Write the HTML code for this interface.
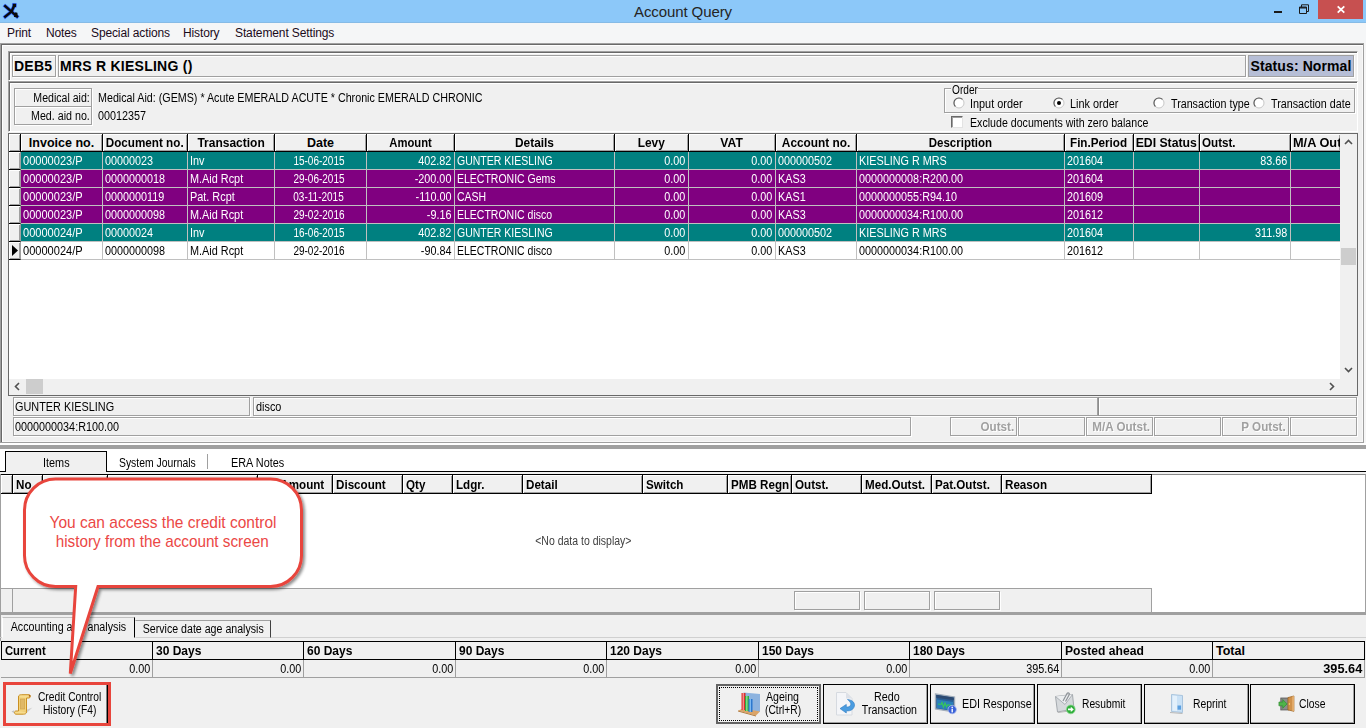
<!DOCTYPE html><html><head><meta charset="utf-8"><title>Account Query</title><style>
html,body{margin:0;padding:0;}
body{width:1366px;height:728px;overflow:hidden;background:#f0f0f0;position:relative;font-family:"Liberation Sans",sans-serif;font-size:12.5px;color:#000;}
div{position:absolute;box-sizing:border-box;white-space:nowrap;}
svg{position:absolute;overflow:visible;}
span.s,span.sb{display:inline-block;}
.s{transform:scaleX(.87);}
.sb{transform:scaleX(1);font-weight:bold;}
.ol{transform-origin:0 50%;}
.or{transform-origin:100% 50%;}
.oc{transform-origin:50% 50%;}
.t{font-size:12.5px;line-height:13px;height:13px;margin-top:1px;}
.pnl{border:1px solid;border-color:#a0a0a0 #fff #fff #a0a0a0;box-shadow:inset 1px 1px 0 #696969,inset 2px 2px 0 #fff;}
.fld{border:1px solid #a0a0a0;box-shadow:1px 1px 0 #fff,inset 1px 1px 0 #fff;}
.m{font-size:12px;line-height:21px;top:23px;height:21px;color:#1a0a1a;letter-spacing:-0.12px;}
.hd{background:#f0f0f0;border:1px solid #000;border-width:0 1px 1px 0;box-shadow:inset 1px 1px 0 #fff,inset -1px -1px 0 #a0a0a0;font-weight:bold;line-height:19.5px;overflow:hidden;}
.cl{line-height:19.5px;overflow:hidden;}
.w{color:#fff;}
</style></head><body>
<div style="left:0px;top:0px;width:1366px;height:22px;background:#8cc8f9;"></div>
<div style="left:0px;top:22px;width:1366px;height:1px;background:#86bbe6;"></div>
<div style="left:0;top:2.5px;width:1366px;text-align:center;font-size:15px;line-height:18px;color:#242424;letter-spacing:-0.1px;">Account Query</div>
<svg style="left:2px;top:2px" width="18" height="18" viewBox="0 0 18 18"><g fill="none" stroke="#2f5ff0" stroke-width="3.6" stroke-linecap="square"><path d="M3.2 4.2 L15 14.5"/><path d="M3.2 14.7 L9.5 9.6 L12.4 3.4"/></g><rect x="10.2" y="1.2" width="4.4" height="4.2" fill="#2f5ff0"/><g fill="none" stroke="#0a0a0a" stroke-width="2.3" stroke-linecap="square"><path d="M3.2 4.2 L15 14.5"/><path d="M3.2 14.7 L9.5 9.6 L12.2 3.8"/></g><rect x="10.8" y="1.8" width="3.2" height="3.2" fill="#0a0a0a"/><path d="M13.3 10.3 L15.4 10.8 L15.8 15.3 L11.8 14.9Z" fill="#0a0a0a"/></svg>
<div style="left:1318px;top:0px;width:45px;height:19px;background:#c75050;"></div>
<svg style="left:1337px;top:6px" width="8" height="7" viewBox="0 0 8 7"><path d="M0.7 0.3 L7.3 6.7 M7.3 0.3 L0.7 6.7" stroke="#fff" stroke-width="1.8"/></svg>
<div style="left:1274px;top:11px;width:8px;height:2px;background:#1a1a1a;"></div>
<svg style="left:1299px;top:4px" width="10" height="10" viewBox="0 0 10 10"><path d="M0.5 3 H7.5 V9.5 H0.5 Z M2.5 3 V0.8 H9.5 V7.5 H7.5" fill="none" stroke="#1a1a1a" stroke-width="1"/><path d="M0 3.8 H8" stroke="#1a1a1a" stroke-width="1.4"/></svg>
<div style="left:0px;top:23px;width:1366px;height:20px;background:#f5f6f7;"></div>
<div class="m" style="left:7px;">Print</div>
<div class="m" style="left:46px;">Notes</div>
<div class="m" style="left:91px;">Special actions</div>
<div class="m" style="left:183px;">History</div>
<div class="m" style="left:235px;">Statement Settings</div>
<div style="left:1364px;top:43px;width:2px;height:402px;background:#f6f6f6;"></div>
<div style="left:0px;top:43px;width:1364px;height:400px;border:1px solid;border-color:#a0a0a0 #a0a0a0 #a0a0a0 #a0a0a0;box-shadow:inset 1px 1px 0 #696969,inset 2px 2px 0 #fff,inset -1px -1px 0 #f8f8f8;"></div>
<div style="left:0px;top:443px;width:1366px;height:2px;background:#fff;"></div>
<div class="pnl" style="left:8px;top:51px;width:1350px;height:30px;"></div>
<div class="fld" style="left:12px;top:55px;width:44px;height:22px;"></div>
<div style="left:14px;top:57px;font-size:14px;font-weight:bold;line-height:18px;letter-spacing:0.25px;">DEB5</div>
<div class="fld" style="left:58px;top:55px;width:1188px;height:22px;"></div>
<div style="left:60px;top:57px;font-size:14px;font-weight:bold;line-height:18px;letter-spacing:0.25px;">MRS R KIESLING ()</div>
<div style="left:1248px;top:55px;width:106px;height:22px;background:#b6bed6;border:1px solid #a0a0a0;box-shadow:1px 1px 0 #fff;"></div>
<div style="left:1250.5px;top:57px;font-size:14px;font-weight:bold;line-height:18px;letter-spacing:0.1px;">Status: Normal</div>
<div class="pnl" style="left:8px;top:81px;width:1350px;height:51px;"></div>
<div class="fld" style="left:14px;top:88px;width:78px;height:19px;"></div>
<div class="fld" style="left:14px;top:106px;width:78px;height:19px;"></div>
<div class="t" style="left:-106px;top:91px;width:196px;text-align:right;"><span class="s or" style="transform:scaleX(0.845)">Medical aid:</span></div>
<div class="t" style="left:-106px;top:109px;width:196px;text-align:right;"><span class="s or" style="transform:scaleX(0.855)">Med. aid no.</span></div>
<div class="t" style="left:98px;top:91px;"><span class="s ol" style="transform:scaleX(0.857)">Medical Aid: (GEMS) * Acute EMERALD ACUTE * Chronic EMERALD CHRONIC</span></div>
<div class="t" style="left:98px;top:109px;"><span class="s ol" style="transform:scaleX(0.863)">00012357</span></div>
<div style="left:944px;top:88px;width:411px;height:25px;border:1px solid #a0a0a0;box-shadow:1px 1px 0 #fff, inset 1px 1px 0 #fff;"></div>
<div style="left:951px;top:84px;width:27px;height:12px;background:#f0f0f0;"></div>
<div class="t" style="left:952px;top:83px;"><span class="s ol" style="transform:scaleX(0.81)">Order</span></div>
<svg style="left:953px;top:97px" width="12" height="12" viewBox="0 0 12 12"><circle cx="6" cy="6" r="5" fill="#fff" stroke="#c8c8c8" stroke-width="1"/><path d="M2.4 9.5 A5 5 0 0 1 9.5 2.4" fill="none" stroke="#5a5a5a" stroke-width="1.1"/></svg>
<div class="t" style="left:970px;top:97px;"><span class="s ol">Input order</span></div>
<svg style="left:1053px;top:97px" width="12" height="12" viewBox="0 0 12 12"><circle cx="6" cy="6" r="5" fill="#fff" stroke="#c8c8c8" stroke-width="1"/><path d="M2.4 9.5 A5 5 0 0 1 9.5 2.4" fill="none" stroke="#5a5a5a" stroke-width="1.1"/><circle cx="6" cy="6" r="2" fill="#000"/></svg>
<div class="t" style="left:1070px;top:97px;"><span class="s ol">Link order</span></div>
<svg style="left:1153px;top:97px" width="12" height="12" viewBox="0 0 12 12"><circle cx="6" cy="6" r="5" fill="#fff" stroke="#c8c8c8" stroke-width="1"/><path d="M2.4 9.5 A5 5 0 0 1 9.5 2.4" fill="none" stroke="#5a5a5a" stroke-width="1.1"/></svg>
<div class="t" style="left:1171px;top:97px;"><span class="s ol" style="transform:scaleX(0.856)">Transaction type</span></div>
<svg style="left:1253px;top:97px" width="12" height="12" viewBox="0 0 12 12"><circle cx="6" cy="6" r="5" fill="#fff" stroke="#c8c8c8" stroke-width="1"/><path d="M2.4 9.5 A5 5 0 0 1 9.5 2.4" fill="none" stroke="#5a5a5a" stroke-width="1.1"/></svg>
<div class="t" style="left:1271px;top:97px;"><span class="s ol" style="transform:scaleX(0.86)">Transaction date</span></div>
<div style="left:951px;top:116px;width:12px;height:12px;background:#fff;border:1px solid;border-color:#696969 #e3e3e3 #e3e3e3 #696969;box-shadow:inset 1px 1px 0 #a0a0a0;"></div>
<div class="t" style="left:970px;top:116px;"><span class="s ol" style="transform:scaleX(0.85)">Exclude documents with zero balance</span></div>
<div style="left:8px;top:133px;width:1350px;height:263px;background:#fff;border:1px solid;border-color:#696969;"></div>
<div class="hd" style="left:9px;top:134px;width:12px;height:18px;"></div>
<div class="hd" style="left:21px;top:134px;width:82px;height:18px;text-align:center;"><span class="sb oc" style="transform:scaleX(1)">Invoice no.</span></div>
<div class="hd" style="left:103px;top:134px;width:85px;height:18px;text-align:center;"><span class="sb oc" style="transform:scaleX(0.935)">Document no.</span></div>
<div class="hd" style="left:188px;top:134px;width:87px;height:18px;text-align:center;"><span class="sb oc" style="transform:scaleX(0.96)">Transaction</span></div>
<div class="hd" style="left:275px;top:134px;width:92px;height:18px;text-align:center;"><span class="sb oc" style="transform:scaleX(1)">Date</span></div>
<div class="hd" style="left:367px;top:134px;width:88px;height:18px;text-align:center;"><span class="sb oc" style="transform:scaleX(0.9)">Amount</span></div>
<div class="hd" style="left:455px;top:134px;width:160px;height:18px;text-align:center;"><span class="sb oc" style="transform:scaleX(0.95)">Details</span></div>
<div class="hd" style="left:615px;top:134px;width:74px;height:18px;text-align:center;"><span class="sb oc" style="transform:scaleX(0.95)">Levy</span></div>
<div class="hd" style="left:689px;top:134px;width:87px;height:18px;text-align:center;"><span class="sb oc" style="transform:scaleX(0.97)">VAT</span></div>
<div class="hd" style="left:776px;top:134px;width:81px;height:18px;text-align:center;"><span class="sb oc" style="transform:scaleX(0.95)">Account no.</span></div>
<div class="hd" style="left:857px;top:134px;width:208px;height:18px;text-align:center;"><span class="sb oc" style="transform:scaleX(0.92)">Description</span></div>
<div class="hd" style="left:1065px;top:134px;width:69px;height:18px;text-align:center;"><span class="sb oc" style="transform:scaleX(0.935)">Fin.Period</span></div>
<div class="hd" style="left:1134px;top:134px;width:66px;height:18px;text-align:center;"><span class="sb oc" style="transform:scaleX(0.98)">EDI Status</span></div>
<div class="hd" style="left:1200px;top:134px;width:91px;height:18px;text-align:left;padding-left:2px;"><span class="sb ol" style="transform:scaleX(0.93)">Outst.</span></div>
<div class="hd" style="left:1291px;top:134px;width:49px;height:18px;text-align:left;padding-left:2px;border-right:0;"><span class="sb ol" style="transform:scaleX(1.02)">M/A Out</span></div>
<div class="hd" style="left:9px;top:152px;width:12px;height:18px;border-right-color:#a0a0a0;"></div>
<div style="left:21px;top:152px;width:1319px;height:18px;background:#008080;border-bottom:1px solid #c0c0c0;"></div>
<div class="cl" style="left:21px;top:152px;width:82px;height:18px;color:#fff;padding-left:2.2px;border-right:1px solid #c0c0c0;"><span class="s ol" style="transform:scaleX(0.885)">00000023/P</span></div>
<div class="cl" style="left:103px;top:152px;width:85px;height:18px;color:#fff;padding-left:2.2px;border-right:1px solid #c0c0c0;"><span class="s ol" style="transform:scaleX(0.865)">00000023</span></div>
<div class="cl" style="left:188px;top:152px;width:87px;height:18px;color:#fff;padding-left:2.2px;border-right:1px solid #c0c0c0;"><span class="s ol" style="transform:scaleX(0.87)">Inv</span></div>
<div class="cl" style="left:275px;top:152px;width:92px;height:18px;color:#fff;text-align:center;padding-right:3px;border-right:1px solid #c0c0c0;"><span class="s oc" style="transform:scaleX(0.8)">15-06-2015</span></div>
<div class="cl" style="left:367px;top:152px;width:88px;height:18px;color:#fff;text-align:right;padding-right:2.8px;border-right:1px solid #c0c0c0;"><span class="s or" style="transform:scaleX(0.865)">402.82</span></div>
<div class="cl" style="left:455px;top:152px;width:160px;height:18px;color:#fff;padding-left:2.2px;border-right:1px solid #c0c0c0;"><span class="s ol" style="transform:scaleX(0.84)">GUNTER KIESLING</span></div>
<div class="cl" style="left:615px;top:152px;width:74px;height:18px;color:#fff;text-align:right;padding-right:2.8px;border-right:1px solid #c0c0c0;"><span class="s or" style="transform:scaleX(0.865)">0.00</span></div>
<div class="cl" style="left:689px;top:152px;width:87px;height:18px;color:#fff;text-align:right;padding-right:2.8px;border-right:1px solid #c0c0c0;"><span class="s or" style="transform:scaleX(0.865)">0.00</span></div>
<div class="cl" style="left:776px;top:152px;width:81px;height:18px;color:#fff;padding-left:2.2px;border-right:1px solid #c0c0c0;"><span class="s ol" style="transform:scaleX(0.865)">000000502</span></div>
<div class="cl" style="left:857px;top:152px;width:208px;height:18px;color:#fff;padding-left:2.2px;border-right:1px solid #c0c0c0;"><span class="s ol" style="transform:scaleX(0.865)">KIESLING R MRS</span></div>
<div class="cl" style="left:1065px;top:152px;width:69px;height:18px;color:#fff;padding-left:2.2px;border-right:1px solid #c0c0c0;"><span class="s ol" style="transform:scaleX(0.865)">201604</span></div>
<div class="cl" style="left:1134px;top:152px;width:66px;height:18px;color:#fff;padding-left:2.2px;border-right:1px solid #c0c0c0;"></div>
<div class="cl" style="left:1200px;top:152px;width:91px;height:18px;color:#fff;text-align:right;padding-right:2.8px;border-right:1px solid #c0c0c0;"><span class="s or" style="transform:scaleX(0.865)">83.66</span></div>
<div class="cl" style="left:1291px;top:152px;width:49px;height:18px;color:#fff;padding-left:2.2px;"></div>
<div class="hd" style="left:9px;top:170px;width:12px;height:18px;border-right-color:#a0a0a0;"></div>
<div style="left:21px;top:170px;width:1319px;height:18px;background:#800080;border-bottom:1px solid #c0c0c0;"></div>
<div class="cl" style="left:21px;top:170px;width:82px;height:18px;color:#fff;padding-left:2.2px;border-right:1px solid #c0c0c0;"><span class="s ol" style="transform:scaleX(0.885)">00000023/P</span></div>
<div class="cl" style="left:103px;top:170px;width:85px;height:18px;color:#fff;padding-left:2.2px;border-right:1px solid #c0c0c0;"><span class="s ol" style="transform:scaleX(0.865)">0000000018</span></div>
<div class="cl" style="left:188px;top:170px;width:87px;height:18px;color:#fff;padding-left:2.2px;border-right:1px solid #c0c0c0;"><span class="s ol" style="transform:scaleX(0.87)">M.Aid Rcpt</span></div>
<div class="cl" style="left:275px;top:170px;width:92px;height:18px;color:#fff;text-align:center;padding-right:3px;border-right:1px solid #c0c0c0;"><span class="s oc" style="transform:scaleX(0.8)">29-06-2015</span></div>
<div class="cl" style="left:367px;top:170px;width:88px;height:18px;color:#fff;text-align:right;padding-right:2.8px;border-right:1px solid #c0c0c0;"><span class="s or" style="transform:scaleX(0.865)">-200.00</span></div>
<div class="cl" style="left:455px;top:170px;width:160px;height:18px;color:#fff;padding-left:2.2px;border-right:1px solid #c0c0c0;"><span class="s ol" style="transform:scaleX(0.84)">ELECTRONIC Gems</span></div>
<div class="cl" style="left:615px;top:170px;width:74px;height:18px;color:#fff;text-align:right;padding-right:2.8px;border-right:1px solid #c0c0c0;"><span class="s or" style="transform:scaleX(0.865)">0.00</span></div>
<div class="cl" style="left:689px;top:170px;width:87px;height:18px;color:#fff;text-align:right;padding-right:2.8px;border-right:1px solid #c0c0c0;"><span class="s or" style="transform:scaleX(0.865)">0.00</span></div>
<div class="cl" style="left:776px;top:170px;width:81px;height:18px;color:#fff;padding-left:2.2px;border-right:1px solid #c0c0c0;"><span class="s ol" style="transform:scaleX(0.865)">KAS3</span></div>
<div class="cl" style="left:857px;top:170px;width:208px;height:18px;color:#fff;padding-left:2.2px;border-right:1px solid #c0c0c0;"><span class="s ol" style="transform:scaleX(0.865)">0000000008:R200.00</span></div>
<div class="cl" style="left:1065px;top:170px;width:69px;height:18px;color:#fff;padding-left:2.2px;border-right:1px solid #c0c0c0;"><span class="s ol" style="transform:scaleX(0.865)">201604</span></div>
<div class="cl" style="left:1134px;top:170px;width:66px;height:18px;color:#fff;padding-left:2.2px;border-right:1px solid #c0c0c0;"></div>
<div class="cl" style="left:1200px;top:170px;width:91px;height:18px;color:#fff;text-align:right;padding-right:2.8px;border-right:1px solid #c0c0c0;"></div>
<div class="cl" style="left:1291px;top:170px;width:49px;height:18px;color:#fff;padding-left:2.2px;"></div>
<div class="hd" style="left:9px;top:188px;width:12px;height:18px;border-right-color:#a0a0a0;"></div>
<div style="left:21px;top:188px;width:1319px;height:18px;background:#800080;border-bottom:1px solid #c0c0c0;"></div>
<div class="cl" style="left:21px;top:188px;width:82px;height:18px;color:#fff;padding-left:2.2px;border-right:1px solid #c0c0c0;"><span class="s ol" style="transform:scaleX(0.885)">00000023/P</span></div>
<div class="cl" style="left:103px;top:188px;width:85px;height:18px;color:#fff;padding-left:2.2px;border-right:1px solid #c0c0c0;"><span class="s ol" style="transform:scaleX(0.865)">0000000119</span></div>
<div class="cl" style="left:188px;top:188px;width:87px;height:18px;color:#fff;padding-left:2.2px;border-right:1px solid #c0c0c0;"><span class="s ol" style="transform:scaleX(0.87)">Pat. Rcpt</span></div>
<div class="cl" style="left:275px;top:188px;width:92px;height:18px;color:#fff;text-align:center;padding-right:3px;border-right:1px solid #c0c0c0;"><span class="s oc" style="transform:scaleX(0.8)">03-11-2015</span></div>
<div class="cl" style="left:367px;top:188px;width:88px;height:18px;color:#fff;text-align:right;padding-right:2.8px;border-right:1px solid #c0c0c0;"><span class="s or" style="transform:scaleX(0.865)">-110.00</span></div>
<div class="cl" style="left:455px;top:188px;width:160px;height:18px;color:#fff;padding-left:2.2px;border-right:1px solid #c0c0c0;"><span class="s ol" style="transform:scaleX(0.84)">CASH</span></div>
<div class="cl" style="left:615px;top:188px;width:74px;height:18px;color:#fff;text-align:right;padding-right:2.8px;border-right:1px solid #c0c0c0;"><span class="s or" style="transform:scaleX(0.865)">0.00</span></div>
<div class="cl" style="left:689px;top:188px;width:87px;height:18px;color:#fff;text-align:right;padding-right:2.8px;border-right:1px solid #c0c0c0;"><span class="s or" style="transform:scaleX(0.865)">0.00</span></div>
<div class="cl" style="left:776px;top:188px;width:81px;height:18px;color:#fff;padding-left:2.2px;border-right:1px solid #c0c0c0;"><span class="s ol" style="transform:scaleX(0.865)">KAS1</span></div>
<div class="cl" style="left:857px;top:188px;width:208px;height:18px;color:#fff;padding-left:2.2px;border-right:1px solid #c0c0c0;"><span class="s ol" style="transform:scaleX(0.865)">0000000055:R94.10</span></div>
<div class="cl" style="left:1065px;top:188px;width:69px;height:18px;color:#fff;padding-left:2.2px;border-right:1px solid #c0c0c0;"><span class="s ol" style="transform:scaleX(0.865)">201609</span></div>
<div class="cl" style="left:1134px;top:188px;width:66px;height:18px;color:#fff;padding-left:2.2px;border-right:1px solid #c0c0c0;"></div>
<div class="cl" style="left:1200px;top:188px;width:91px;height:18px;color:#fff;text-align:right;padding-right:2.8px;border-right:1px solid #c0c0c0;"></div>
<div class="cl" style="left:1291px;top:188px;width:49px;height:18px;color:#fff;padding-left:2.2px;"></div>
<div class="hd" style="left:9px;top:206px;width:12px;height:18px;border-right-color:#a0a0a0;"></div>
<div style="left:21px;top:206px;width:1319px;height:18px;background:#800080;border-bottom:1px solid #c0c0c0;"></div>
<div class="cl" style="left:21px;top:206px;width:82px;height:18px;color:#fff;padding-left:2.2px;border-right:1px solid #c0c0c0;"><span class="s ol" style="transform:scaleX(0.885)">00000023/P</span></div>
<div class="cl" style="left:103px;top:206px;width:85px;height:18px;color:#fff;padding-left:2.2px;border-right:1px solid #c0c0c0;"><span class="s ol" style="transform:scaleX(0.865)">0000000098</span></div>
<div class="cl" style="left:188px;top:206px;width:87px;height:18px;color:#fff;padding-left:2.2px;border-right:1px solid #c0c0c0;"><span class="s ol" style="transform:scaleX(0.87)">M.Aid Rcpt</span></div>
<div class="cl" style="left:275px;top:206px;width:92px;height:18px;color:#fff;text-align:center;padding-right:3px;border-right:1px solid #c0c0c0;"><span class="s oc" style="transform:scaleX(0.8)">29-02-2016</span></div>
<div class="cl" style="left:367px;top:206px;width:88px;height:18px;color:#fff;text-align:right;padding-right:2.8px;border-right:1px solid #c0c0c0;"><span class="s or" style="transform:scaleX(0.865)">-9.16</span></div>
<div class="cl" style="left:455px;top:206px;width:160px;height:18px;color:#fff;padding-left:2.2px;border-right:1px solid #c0c0c0;"><span class="s ol" style="transform:scaleX(0.84)">ELECTRONIC disco</span></div>
<div class="cl" style="left:615px;top:206px;width:74px;height:18px;color:#fff;text-align:right;padding-right:2.8px;border-right:1px solid #c0c0c0;"><span class="s or" style="transform:scaleX(0.865)">0.00</span></div>
<div class="cl" style="left:689px;top:206px;width:87px;height:18px;color:#fff;text-align:right;padding-right:2.8px;border-right:1px solid #c0c0c0;"><span class="s or" style="transform:scaleX(0.865)">0.00</span></div>
<div class="cl" style="left:776px;top:206px;width:81px;height:18px;color:#fff;padding-left:2.2px;border-right:1px solid #c0c0c0;"><span class="s ol" style="transform:scaleX(0.865)">KAS3</span></div>
<div class="cl" style="left:857px;top:206px;width:208px;height:18px;color:#fff;padding-left:2.2px;border-right:1px solid #c0c0c0;"><span class="s ol" style="transform:scaleX(0.865)">0000000034:R100.00</span></div>
<div class="cl" style="left:1065px;top:206px;width:69px;height:18px;color:#fff;padding-left:2.2px;border-right:1px solid #c0c0c0;"><span class="s ol" style="transform:scaleX(0.865)">201612</span></div>
<div class="cl" style="left:1134px;top:206px;width:66px;height:18px;color:#fff;padding-left:2.2px;border-right:1px solid #c0c0c0;"></div>
<div class="cl" style="left:1200px;top:206px;width:91px;height:18px;color:#fff;text-align:right;padding-right:2.8px;border-right:1px solid #c0c0c0;"></div>
<div class="cl" style="left:1291px;top:206px;width:49px;height:18px;color:#fff;padding-left:2.2px;"></div>
<div class="hd" style="left:9px;top:224px;width:12px;height:18px;border-right-color:#a0a0a0;"></div>
<div style="left:21px;top:224px;width:1319px;height:18px;background:#008080;border-bottom:1px solid #c0c0c0;"></div>
<div class="cl" style="left:21px;top:224px;width:82px;height:18px;color:#fff;padding-left:2.2px;border-right:1px solid #c0c0c0;"><span class="s ol" style="transform:scaleX(0.885)">00000024/P</span></div>
<div class="cl" style="left:103px;top:224px;width:85px;height:18px;color:#fff;padding-left:2.2px;border-right:1px solid #c0c0c0;"><span class="s ol" style="transform:scaleX(0.865)">00000024</span></div>
<div class="cl" style="left:188px;top:224px;width:87px;height:18px;color:#fff;padding-left:2.2px;border-right:1px solid #c0c0c0;"><span class="s ol" style="transform:scaleX(0.87)">Inv</span></div>
<div class="cl" style="left:275px;top:224px;width:92px;height:18px;color:#fff;text-align:center;padding-right:3px;border-right:1px solid #c0c0c0;"><span class="s oc" style="transform:scaleX(0.8)">16-06-2015</span></div>
<div class="cl" style="left:367px;top:224px;width:88px;height:18px;color:#fff;text-align:right;padding-right:2.8px;border-right:1px solid #c0c0c0;"><span class="s or" style="transform:scaleX(0.865)">402.82</span></div>
<div class="cl" style="left:455px;top:224px;width:160px;height:18px;color:#fff;padding-left:2.2px;border-right:1px solid #c0c0c0;"><span class="s ol" style="transform:scaleX(0.84)">GUNTER KIESLING</span></div>
<div class="cl" style="left:615px;top:224px;width:74px;height:18px;color:#fff;text-align:right;padding-right:2.8px;border-right:1px solid #c0c0c0;"><span class="s or" style="transform:scaleX(0.865)">0.00</span></div>
<div class="cl" style="left:689px;top:224px;width:87px;height:18px;color:#fff;text-align:right;padding-right:2.8px;border-right:1px solid #c0c0c0;"><span class="s or" style="transform:scaleX(0.865)">0.00</span></div>
<div class="cl" style="left:776px;top:224px;width:81px;height:18px;color:#fff;padding-left:2.2px;border-right:1px solid #c0c0c0;"><span class="s ol" style="transform:scaleX(0.865)">000000502</span></div>
<div class="cl" style="left:857px;top:224px;width:208px;height:18px;color:#fff;padding-left:2.2px;border-right:1px solid #c0c0c0;"><span class="s ol" style="transform:scaleX(0.865)">KIESLING R MRS</span></div>
<div class="cl" style="left:1065px;top:224px;width:69px;height:18px;color:#fff;padding-left:2.2px;border-right:1px solid #c0c0c0;"><span class="s ol" style="transform:scaleX(0.865)">201604</span></div>
<div class="cl" style="left:1134px;top:224px;width:66px;height:18px;color:#fff;padding-left:2.2px;border-right:1px solid #c0c0c0;"></div>
<div class="cl" style="left:1200px;top:224px;width:91px;height:18px;color:#fff;text-align:right;padding-right:2.8px;border-right:1px solid #c0c0c0;"><span class="s or" style="transform:scaleX(0.865)">311.98</span></div>
<div class="cl" style="left:1291px;top:224px;width:49px;height:18px;color:#fff;padding-left:2.2px;"></div>
<div class="hd" style="left:9px;top:242px;width:12px;height:18px;border-right-color:#a0a0a0;"></div>
<div style="left:21px;top:242px;width:1319px;height:18px;background:#ffffff;border-bottom:1px solid #c0c0c0;"></div>
<div class="cl" style="left:21px;top:242px;width:82px;height:18px;padding-left:2.2px;border-right:1px solid #c0c0c0;"><span class="s ol" style="transform:scaleX(0.885)">00000024/P</span></div>
<div class="cl" style="left:103px;top:242px;width:85px;height:18px;padding-left:2.2px;border-right:1px solid #c0c0c0;"><span class="s ol" style="transform:scaleX(0.865)">0000000098</span></div>
<div class="cl" style="left:188px;top:242px;width:87px;height:18px;padding-left:2.2px;border-right:1px solid #c0c0c0;"><span class="s ol" style="transform:scaleX(0.87)">M.Aid Rcpt</span></div>
<div class="cl" style="left:275px;top:242px;width:92px;height:18px;text-align:center;padding-right:3px;border-right:1px solid #c0c0c0;"><span class="s oc" style="transform:scaleX(0.8)">29-02-2016</span></div>
<div class="cl" style="left:367px;top:242px;width:88px;height:18px;text-align:right;padding-right:2.8px;border-right:1px solid #c0c0c0;"><span class="s or" style="transform:scaleX(0.865)">-90.84</span></div>
<div class="cl" style="left:455px;top:242px;width:160px;height:18px;padding-left:2.2px;border-right:1px solid #c0c0c0;"><span class="s ol" style="transform:scaleX(0.84)">ELECTRONIC disco</span></div>
<div class="cl" style="left:615px;top:242px;width:74px;height:18px;text-align:right;padding-right:2.8px;border-right:1px solid #c0c0c0;"><span class="s or" style="transform:scaleX(0.865)">0.00</span></div>
<div class="cl" style="left:689px;top:242px;width:87px;height:18px;text-align:right;padding-right:2.8px;border-right:1px solid #c0c0c0;"><span class="s or" style="transform:scaleX(0.865)">0.00</span></div>
<div class="cl" style="left:776px;top:242px;width:81px;height:18px;padding-left:2.2px;border-right:1px solid #c0c0c0;"><span class="s ol" style="transform:scaleX(0.865)">KAS3</span></div>
<div class="cl" style="left:857px;top:242px;width:208px;height:18px;padding-left:2.2px;border-right:1px solid #c0c0c0;"><span class="s ol" style="transform:scaleX(0.865)">0000000034:R100.00</span></div>
<div class="cl" style="left:1065px;top:242px;width:69px;height:18px;padding-left:2.2px;border-right:1px solid #c0c0c0;"><span class="s ol" style="transform:scaleX(0.865)">201612</span></div>
<div class="cl" style="left:1134px;top:242px;width:66px;height:18px;padding-left:2.2px;border-right:1px solid #c0c0c0;"></div>
<div class="cl" style="left:1200px;top:242px;width:91px;height:18px;text-align:right;padding-right:2.8px;border-right:1px solid #c0c0c0;"></div>
<div class="cl" style="left:1291px;top:242px;width:49px;height:18px;padding-left:2.2px;"></div>
<svg style="left:12px;top:245px" width="6" height="11" viewBox="0 0 6 11"><path d="M0 0 L6 5.5 L0 11Z" fill="#000"/></svg>
<div style="left:1340px;top:134px;width:17px;height:245px;background:#f0f0f0;"></div>
<div style="left:1341px;top:248px;width:15px;height:17px;background:#cdcdcd;"></div>
<svg style="left:1344px;top:139px" width="9" height="6" viewBox="0 0 9 6"><path d="M1 5 L4.5 1.5 L8 5" fill="none" stroke="#505050" stroke-width="1.6"/></svg>
<svg style="left:1344px;top:367px" width="9" height="6" viewBox="0 0 9 6"><path d="M1 1 L4.5 4.5 L8 1" fill="none" stroke="#505050" stroke-width="1.6"/></svg>
<div style="left:9px;top:379px;width:1348px;height:16px;background:#f0f0f0;"></div>
<div style="left:26px;top:379px;width:17px;height:15px;background:#cdcdcd;"></div>
<svg style="left:14px;top:382px" width="6" height="9" viewBox="0 0 6 9"><path d="M5 1 L1.5 4.5 L5 8" fill="none" stroke="#505050" stroke-width="1.6"/></svg>
<svg style="left:1329px;top:382px" width="6" height="9" viewBox="0 0 6 9"><path d="M1 1 L4.5 4.5 L1 8" fill="none" stroke="#505050" stroke-width="1.6"/></svg>
<div class="fld" style="left:13px;top:397px;width:237px;height:19px;"></div>
<div class="t" style="left:15px;top:400px;"><span class="s ol">GUNTER KIESLING</span></div>
<div class="fld" style="left:253px;top:397px;width:845px;height:19px;"></div>
<div class="t" style="left:256px;top:400px;"><span class="s ol">disco</span></div>
<div class="fld" style="left:1098px;top:397px;width:259px;height:19px;border-left-color:#8c8c8c;"></div>
<div class="fld" style="left:13px;top:417px;width:898px;height:19px;"></div>
<div class="t" style="left:15px;top:420px;"><span class="s ol" style="transform:scaleX(0.865)">0000000034:R100.00</span></div>
<div class="fld" style="left:950px;top:417px;width:67px;height:19px;"></div>
<div class="t" style="left:830px;top:420px;width:184px;text-align:right;font-weight:bold;color:#a0a0a0;text-shadow:1px 1px 0 #fff;"><span class="sb or" style="transform:scaleX(0.93)">Outst.</span></div>
<div class="fld" style="left:1018px;top:417px;width:67px;height:19px;"></div>
<div class="fld" style="left:1086px;top:417px;width:67px;height:19px;"></div>
<div class="t" style="left:966px;top:420px;width:184px;text-align:right;font-weight:bold;color:#a0a0a0;text-shadow:1px 1px 0 #fff;"><span class="sb or" style="transform:scaleX(0.93)">M/A Outst.</span></div>
<div class="fld" style="left:1154px;top:417px;width:67px;height:19px;"></div>
<div class="fld" style="left:1222px;top:417px;width:67px;height:19px;"></div>
<div class="t" style="left:1102px;top:420px;width:184px;text-align:right;font-weight:bold;color:#a0a0a0;text-shadow:1px 1px 0 #fff;"><span class="sb or" style="transform:scaleX(0.93)">P Outst.</span></div>
<div class="fld" style="left:1290px;top:417px;width:67px;height:19px;"></div>
<div style="left:0px;top:445px;width:1366px;height:4px;background:#a0a0a0;"></div>
<div style="left:0px;top:449px;width:1366px;height:24px;background:#fff;"></div>
<div style="left:0px;top:471px;width:1366px;height:1px;background:#000;"></div>
<div style="left:0px;top:472px;width:1366px;height:2px;background:#f0f0f0;"></div>
<div style="left:5px;top:451px;width:102px;height:21px;background:#f0f0f0;border:1px solid #000;border-bottom:0;"></div>
<div class="t" style="left:-55px;top:456px;width:222px;text-align:center;"><span class="s oc">Items</span></div>
<div class="t" style="left:119px;top:456px;"><span class="s ol" style="transform:scaleX(0.83)">System Journals</span></div>
<div style="left:207px;top:454px;width:1px;height:15px;background:#a0a0a0;"></div>
<div class="t" style="left:231px;top:456px;"><span class="s ol">ERA Notes</span></div>
<div style="left:0px;top:474px;width:1366px;height:139px;background:#fff;border:1px solid;border-color:#8a8a8a #a0a0a0 #a0a0a0 #a0a0a0;"></div>
<div style="left:1px;top:474px;width:1151px;height:1px;background:#000;"></div>
<div class="hd" style="left:1px;top:475px;width:12px;height:19px;"></div>
<div class="hd" style="left:13px;top:475px;width:30px;height:19px;padding-left:3px;line-height:20.5px;"><span class="sb ol" style="transform:scaleX(0.93)">No</span></div>
<div class="hd" style="left:43px;top:475px;width:65px;height:19px;padding-left:3px;line-height:20.5px;"></div>
<div class="hd" style="left:108px;top:475px;width:150px;height:19px;padding-left:3px;line-height:20.5px;"></div>
<div class="hd" style="left:258px;top:475px;width:75px;height:19px;text-align:right;padding-right:8px;line-height:20.5px;"><span class="sb or" style="transform:scaleX(0.93)">Amount</span></div>
<div class="hd" style="left:333px;top:475px;width:70px;height:19px;padding-left:3px;line-height:20.5px;"><span class="sb ol" style="transform:scaleX(0.93)">Discount</span></div>
<div class="hd" style="left:403px;top:475px;width:50px;height:19px;padding-left:3px;line-height:20.5px;"><span class="sb ol" style="transform:scaleX(0.93)">Qty</span></div>
<div class="hd" style="left:453px;top:475px;width:70px;height:19px;padding-left:3px;line-height:20.5px;"><span class="sb ol" style="transform:scaleX(0.93)">Ldgr.</span></div>
<div class="hd" style="left:523px;top:475px;width:120px;height:19px;padding-left:3px;line-height:20.5px;"><span class="sb ol" style="transform:scaleX(0.93)">Detail</span></div>
<div class="hd" style="left:643px;top:475px;width:85px;height:19px;padding-left:3px;line-height:20.5px;"><span class="sb ol" style="transform:scaleX(0.93)">Switch</span></div>
<div class="hd" style="left:728px;top:475px;width:64px;height:19px;padding-left:3px;line-height:20.5px;"><span class="sb ol" style="transform:scaleX(0.93)">PMB Regn</span></div>
<div class="hd" style="left:792px;top:475px;width:70px;height:19px;padding-left:3px;line-height:20.5px;"><span class="sb ol" style="transform:scaleX(0.93)">Outst.</span></div>
<div class="hd" style="left:862px;top:475px;width:70px;height:19px;padding-left:3px;line-height:20.5px;"><span class="sb ol" style="transform:scaleX(0.93)">Med.Outst.</span></div>
<div class="hd" style="left:932px;top:475px;width:70px;height:19px;padding-left:3px;line-height:20.5px;"><span class="sb ol" style="transform:scaleX(0.93)">Pat.Outst.</span></div>
<div class="hd" style="left:1002px;top:475px;width:150px;height:19px;padding-left:3px;line-height:20.5px;"><span class="sb ol" style="transform:scaleX(0.93)">Reason</span></div>
<div class="t" style="left:423px;top:534px;width:320px;text-align:center;color:#404040;"><span class="s oc" style="transform:scaleX(0.84)">&lt;No data to display&gt;</span></div>
<div style="left:1px;top:588px;width:1151px;height:24px;background:#f0f0f0;border:1px solid #a0a0a0;border-width:1px 1px 0 0;"></div>
<div style="left:12px;top:589px;width:1px;height:23px;background:#a0a0a0;"></div>
<div style="left:794px;top:591px;width:66px;height:19px;border:1px solid #a0a0a0;box-shadow:1px 1px 0 #fff,inset 1px 1px 0 #fff;"></div>
<div style="left:864px;top:591px;width:66px;height:19px;border:1px solid #a0a0a0;box-shadow:1px 1px 0 #fff,inset 1px 1px 0 #fff;"></div>
<div style="left:934px;top:591px;width:66px;height:19px;border:1px solid #a0a0a0;box-shadow:1px 1px 0 #fff,inset 1px 1px 0 #fff;"></div>
<div style="left:0px;top:612px;width:1366px;height:3px;background:#a0a0a0;"></div>
<div style="left:0px;top:615px;width:1px;height:26px;background:#a0a0a0;"></div>
<div style="left:0px;top:637px;width:1366px;height:1px;background:#d0d0d0;"></div>
<div style="left:2px;top:617px;width:133px;height:21px;background:#f0f0f0;border:1px solid;border-color:#c0c0c0 #000 #f0f0f0 #fff;"></div>
<div class="t" style="left:-58px;top:620px;width:253px;text-align:center;"><span class="s oc" style="transform:scaleX(0.856)">Accounting age analysis</span></div>
<div style="left:135px;top:620px;width:136px;height:18px;background:#f0f0f0;border:1px solid;border-color:#a0a0a0 #404040 #d0d0d0 #f0f0f0;"></div>
<div class="t" style="left:75px;top:622px;width:256px;text-align:center;"><span class="s oc" style="transform:scaleX(0.85)">Service date age analysis</span></div>
<div style="left:1px;top:641px;width:1364px;height:1px;background:#000;"></div>
<div style="left:1px;top:641px;width:1px;height:19px;background:#000;"></div>
<div style="left:1px;top:642px;width:152px;height:18px;padding-left:4px;line-height:19.5px;border:1px solid #000;border-width:0 1px 1px 0;font-weight:bold;"><span class="sb ol" style="transform:scaleX(0.9)">Current</span></div>
<div style="left:1px;top:660px;width:152px;height:18px;padding-right:2px;text-align:right;line-height:19.5px;border:1px solid #a0a0a0;border-width:0 1px 1px 0;"><span class="s or" style="transform:scaleX(0.865)">0.00</span></div>
<div style="left:153px;top:642px;width:151px;height:18px;padding-left:3px;line-height:19.5px;border:1px solid #000;border-width:0 1px 1px 0;font-weight:bold;"><span class="sb ol" style="transform:scaleX(0.96)">30 Days</span></div>
<div style="left:153px;top:660px;width:151px;height:18px;padding-right:2px;text-align:right;line-height:19.5px;border:1px solid #a0a0a0;border-width:0 1px 1px 0;"><span class="s or" style="transform:scaleX(0.865)">0.00</span></div>
<div style="left:304px;top:642px;width:152px;height:18px;padding-left:3px;line-height:19.5px;border:1px solid #000;border-width:0 1px 1px 0;font-weight:bold;"><span class="sb ol" style="transform:scaleX(0.96)">60 Days</span></div>
<div style="left:304px;top:660px;width:152px;height:18px;padding-right:2px;text-align:right;line-height:19.5px;border:1px solid #a0a0a0;border-width:0 1px 1px 0;"><span class="s or" style="transform:scaleX(0.865)">0.00</span></div>
<div style="left:456px;top:642px;width:151px;height:18px;padding-left:3px;line-height:19.5px;border:1px solid #000;border-width:0 1px 1px 0;font-weight:bold;"><span class="sb ol" style="transform:scaleX(0.96)">90 Days</span></div>
<div style="left:456px;top:660px;width:151px;height:18px;padding-right:2px;text-align:right;line-height:19.5px;border:1px solid #a0a0a0;border-width:0 1px 1px 0;"><span class="s or" style="transform:scaleX(0.865)">0.00</span></div>
<div style="left:607px;top:642px;width:152px;height:18px;padding-left:3px;line-height:19.5px;border:1px solid #000;border-width:0 1px 1px 0;font-weight:bold;"><span class="sb ol" style="transform:scaleX(0.96)">120 Days</span></div>
<div style="left:607px;top:660px;width:152px;height:18px;padding-right:2px;text-align:right;line-height:19.5px;border:1px solid #a0a0a0;border-width:0 1px 1px 0;"><span class="s or" style="transform:scaleX(0.865)">0.00</span></div>
<div style="left:759px;top:642px;width:151px;height:18px;padding-left:3px;line-height:19.5px;border:1px solid #000;border-width:0 1px 1px 0;font-weight:bold;"><span class="sb ol" style="transform:scaleX(0.96)">150 Days</span></div>
<div style="left:759px;top:660px;width:151px;height:18px;padding-right:2px;text-align:right;line-height:19.5px;border:1px solid #a0a0a0;border-width:0 1px 1px 0;"><span class="s or" style="transform:scaleX(0.865)">0.00</span></div>
<div style="left:910px;top:642px;width:152px;height:18px;padding-left:3px;line-height:19.5px;border:1px solid #000;border-width:0 1px 1px 0;font-weight:bold;"><span class="sb ol" style="transform:scaleX(0.96)">180 Days</span></div>
<div style="left:910px;top:660px;width:152px;height:18px;padding-right:2px;text-align:right;line-height:19.5px;border:1px solid #a0a0a0;border-width:0 1px 1px 0;"><span class="s or" style="transform:scaleX(0.865)">395.64</span></div>
<div style="left:1062px;top:642px;width:151px;height:18px;padding-left:3px;line-height:19.5px;border:1px solid #000;border-width:0 1px 1px 0;font-weight:bold;"><span class="sb ol" style="transform:scaleX(0.97)">Posted ahead</span></div>
<div style="left:1062px;top:660px;width:151px;height:18px;padding-right:2px;text-align:right;line-height:19.5px;border:1px solid #a0a0a0;border-width:0 1px 1px 0;"><span class="s or" style="transform:scaleX(0.865)">0.00</span></div>
<div style="left:1213px;top:642px;width:152px;height:18px;padding-left:3px;line-height:19.5px;border:1px solid #000;border-width:0 1px 1px 0;font-weight:bold;"><span class="sb ol" style="transform:scaleX(1)">Total</span></div>
<div style="left:1213px;top:660px;width:152px;height:18px;padding-right:2px;text-align:right;line-height:19.5px;border:1px solid #a0a0a0;border-width:0 1px 1px 0;font-weight:bold;"><span class="sb or" style="transform:scaleX(1.02)">395.64</span></div>
<div style="left:716px;top:684px;width:105px;height:40px;background:#f0f0f0;border:2px solid #646464;"></div>
<div style="left:719px;top:687px;width:99px;height:34px;border:1px dotted #000;"></div>
<div style="left:823px;top:684px;width:105px;height:40px;background:#f0f0f0;border:1px solid #000;box-shadow:inset -1px -1px 0 #a0a0a0;"></div>
<div style="left:930px;top:684px;width:105px;height:40px;background:#f0f0f0;border:1px solid #000;box-shadow:inset -1px -1px 0 #a0a0a0;"></div>
<div style="left:1037px;top:684px;width:105px;height:40px;background:#f0f0f0;border:1px solid #000;box-shadow:inset -1px -1px 0 #a0a0a0;"></div>
<div style="left:1144px;top:684px;width:105px;height:40px;background:#f0f0f0;border:1px solid #000;box-shadow:inset -1px -1px 0 #a0a0a0;"></div>
<div style="left:1250px;top:684px;width:105px;height:40px;background:#f0f0f0;border:1px solid #000;box-shadow:inset -1px -1px 0 #a0a0a0;"></div>
<div class="t" style="left:692px;top:690px;width:180px;text-align:center;"><span class="s oc" style="transform:scaleX(0.85)">Ageing</span></div>
<div class="t" style="left:693px;top:703px;width:180px;text-align:center;"><span class="s oc" style="transform:scaleX(0.82)">(Ctrl+R)</span></div>
<div class="t" style="left:792px;top:690px;width:190px;text-align:center;"><span class="s oc" style="transform:scaleX(0.86)">Redo</span></div>
<div class="t" style="left:794px;top:703px;width:190px;text-align:center;"><span class="s oc" style="transform:scaleX(0.85)">Transaction</span></div>
<div class="t" style="left:962px;top:697px;"><span class="s ol" style="transform:scaleX(0.865)">EDI Response</span></div>
<div class="t" style="left:1082px;top:697px;"><span class="s ol" style="transform:scaleX(0.82)">Resubmit</span></div>
<div class="t" style="left:1193px;top:697px;"><span class="s ol" style="transform:scaleX(0.83)">Reprint</span></div>
<div class="t" style="left:1299px;top:697px;"><span class="s ol" style="transform:scaleX(0.83)">Close</span></div>
<svg style="left:737px;top:691px" width="25" height="26" viewBox="0 0 25 26"><path d="M6.5 1.5 L23 3 V21 L6.5 18Z" fill="#8db3df"/><path d="M1 19.5 L6.5 17.5 L23 20.5 L19 24.5Z" fill="#dba467"/><path d="M1 19.5 L19 24.5 V25.5 L1 20.5Z" fill="#b07a3e"/><rect x="4.5" y="2" width="4" height="17" fill="#d92f2f"/><rect x="5.6" y="2" width="1.4" height="17" fill="#f58c8c"/><rect x="8" y="5" width="4" height="15" fill="#2fa844"/><rect x="9.1" y="5" width="1.4" height="15" fill="#86e08c"/><rect x="11.5" y="8" width="4" height="13" fill="#2b78cf"/><rect x="12.6" y="8" width="1.4" height="13" fill="#7db8f0"/></svg>
<svg style="left:835px;top:691px" width="22" height="26" viewBox="0 0 22 26"><path d="M1.5 1.5 H11 L17 7.5 V24 H1.5Z" fill="#f4f5f8" stroke="#d6dae0" stroke-width="1"/><path d="M11 1.5 V7.5 H17Z" fill="#dde1e8"/><path d="M12.5 8.5 C19.5 9 21.5 14.5 17.5 18.3 C15.5 20 13 20 11.3 19.8 V22 L5 17.6 L11.3 13.4 V15.9 C14.2 16.3 16.6 14.6 15.6 12 C15 10.5 13.8 9.5 12.5 8.5Z" fill="#4a9ce0" stroke="#2a78bf" stroke-width="0.6"/></svg>
<svg style="left:934px;top:692px" width="24" height="24" viewBox="0 0 24 24"><path d="M1.5 2 L20.5 5 V20 L1.5 17Z" fill="#2a5f95" stroke="#a3aebb" stroke-width="1.4"/><path d="M2.2 2.8 L19.8 5.6 V8.3 L2.2 5.7Z" fill="#2c4a72"/><path d="M3 7.5 L19 10 V18.5 L3 16Z" fill="#2b7fba"/><path d="M4 12 L7 12.5 L8 10.5 L9.5 15 L11 11 L12.5 14.8 L13.5 12.8 L17 13.4" fill="none" stroke="#37c857" stroke-width="1.1"/><circle cx="18.2" cy="17.6" r="4.2" fill="#3a62d8" stroke="#a9b9ee" stroke-width="0.8"/><rect x="17.5" y="16.8" width="1.4" height="3.6" fill="#fff"/><rect x="17.5" y="14.7" width="1.4" height="1.4" fill="#fff"/></svg>
<svg style="left:1054px;top:692px" width="24" height="24" viewBox="0 0 24 24"><path d="M1.5 4.5 L18.5 2.5 L20 17 L3.5 20Z" fill="#d6d9dc" stroke="#a4a9ae" stroke-width="1"/><path d="M1.5 4.5 L11 12.5 L18.5 2.5" fill="#eceef0" stroke="#a4a9ae" stroke-width="0.9"/><path d="M9 9 L13 1.5 C14 0.3 16 1.3 15.2 2.8 L11.5 9.5" fill="none" stroke="#8e9398" stroke-width="1.2"/><path d="M4 20.5 L19 18.5" stroke="#b8b8b8" stroke-width="1"/><circle cx="16.8" cy="17.4" r="4.4" fill="#2fae3a" stroke="#8bd890" stroke-width="0.8"/><path d="M14 16.5 H16.8 V14.8 L19.8 17.4 L16.8 20 V18.3 H14Z" fill="#fff"/></svg>
<svg style="left:1169px;top:693px" width="16" height="22" viewBox="0 0 16 22"><path d="M2.5 1.5 L13.5 2.5 V19.5 L2.5 18.5Z" fill="#c9e1f6" stroke="#a9c4dd" stroke-width="1"/><path d="M3.5 2.5 L8 3 V18 L3.5 17.6Z" fill="#e3f0fb"/><rect x="8.5" y="12.5" width="3.6" height="4.2" fill="#5b9fe0"/><path d="M1 19.5 L13.5 20.5" stroke="#b8b8b8" stroke-width="1"/></svg>
<svg style="left:1278px;top:695px" width="18" height="17.5" viewBox="0 0 19 18"><rect x="3" y="3" width="8" height="12.5" fill="#8c8c8c" stroke="#5e5e5e" stroke-width="1"/><path d="M10.5 2.5 L16.8 0.8 V17 L10.5 15.5Z" fill="#d0914b" stroke="#9c6424" stroke-width="0.8"/><path d="M15 1.4 L16.8 0.8 V17 L15 16.5Z" fill="#e6b070"/><circle cx="12" cy="9.3" r="0.8" fill="#ffe27a"/><path d="M1 7.2 H5 V4.6 L9.6 9.2 L5 13.8 V11.2 H1Z" fill="#4fb34a" stroke="#2f8a2f" stroke-width="0.7"/></svg>
<div style="left:5px;top:684px;width:103px;height:41px;background:#f0f0f0;border:1px solid;border-color:#fff #000 #000 #fff;box-shadow:inset -1px -1px 0 #808080;"></div>
<div class="t" style="left:-22px;top:690px;width:184px;text-align:center;"><span class="s oc" style="transform:scaleX(0.82)">Credit Control</span></div>
<div class="t" style="left:-22px;top:703px;width:184px;text-align:center;"><span class="s oc" style="transform:scaleX(0.82)">History (F4)</span></div>
<svg style="left:11px;top:693px" width="24" height="23" viewBox="0 0 24 23"><path d="M12 18 L21.5 14.5 L14.5 21Z" fill="#cfcfcf"/><path d="M0.5 18.5 L3.2 17.2 V20.2Z" fill="#c4c4c4"/><path d="M7.5 3.5 H15.5 V19 H7.5Z" fill="#f3d27a" stroke="#c98f22" stroke-width="1"/><rect x="9.3" y="6" width="4.4" height="10" fill="#e0b866" stroke="#cfa24c" stroke-width="0.6"/><path d="M7.5 4 C7.3 2 9.5 1.6 10.5 1.7 H18 C19.8 1.7 19.8 5 18 5 H15.5" fill="#f7dc8e" stroke="#c98f22" stroke-width="1"/><path d="M15.5 18.6 C15.7 21 13.5 21.2 12.5 21.2 H5 C3 21.2 3 18 5 18 H7.5" fill="#f7dc8e" stroke="#c98f22" stroke-width="1"/><circle cx="18.6" cy="2.8" r="0.9" fill="#a85a14"/></svg>
<div style="left:3px;top:682px;width:108px;height:44px;border:3px solid #e8453c;"></div>
<svg style="left:0;top:0" width="1366" height="728" viewBox="0 0 1366 728"><defs><filter id="sh" x="-10%" y="-10%" width="130%" height="130%"><feGaussianBlur in="SourceAlpha" stdDeviation="1.5"/><feOffset dx="1.5" dy="1.5"/><feComponentTransfer><feFuncA type="linear" slope="0.45"/></feComponentTransfer><feMerge><feMergeNode/><feMergeNode in="SourceGraphic"/></feMerge></filter></defs><path filter="url(#sh)" d="M55.5 479 H270.5 A31 31 0 0 1 301.5 510 V555.5 A31 31 0 0 1 270.5 586.5 H98 L70.3 673.5 L75.7 586.5 H55.5 A31 31 0 0 1 24.5 555.5 V510 A31 31 0 0 1 55.5 479 Z" fill="#fff" stroke="#e8453c" stroke-width="3" stroke-linejoin="miter"/><text x="163" y="528.4" text-anchor="middle" textLength="227" lengthAdjust="spacingAndGlyphs" font-family="Liberation Sans, sans-serif" font-size="15.7" fill="#eb4745">You can access the credit control</text><text x="162.2" y="546.6" text-anchor="middle" textLength="213" lengthAdjust="spacingAndGlyphs" font-family="Liberation Sans, sans-serif" font-size="15.7" fill="#eb4745">history from the account screen</text></svg>
</body></html>
